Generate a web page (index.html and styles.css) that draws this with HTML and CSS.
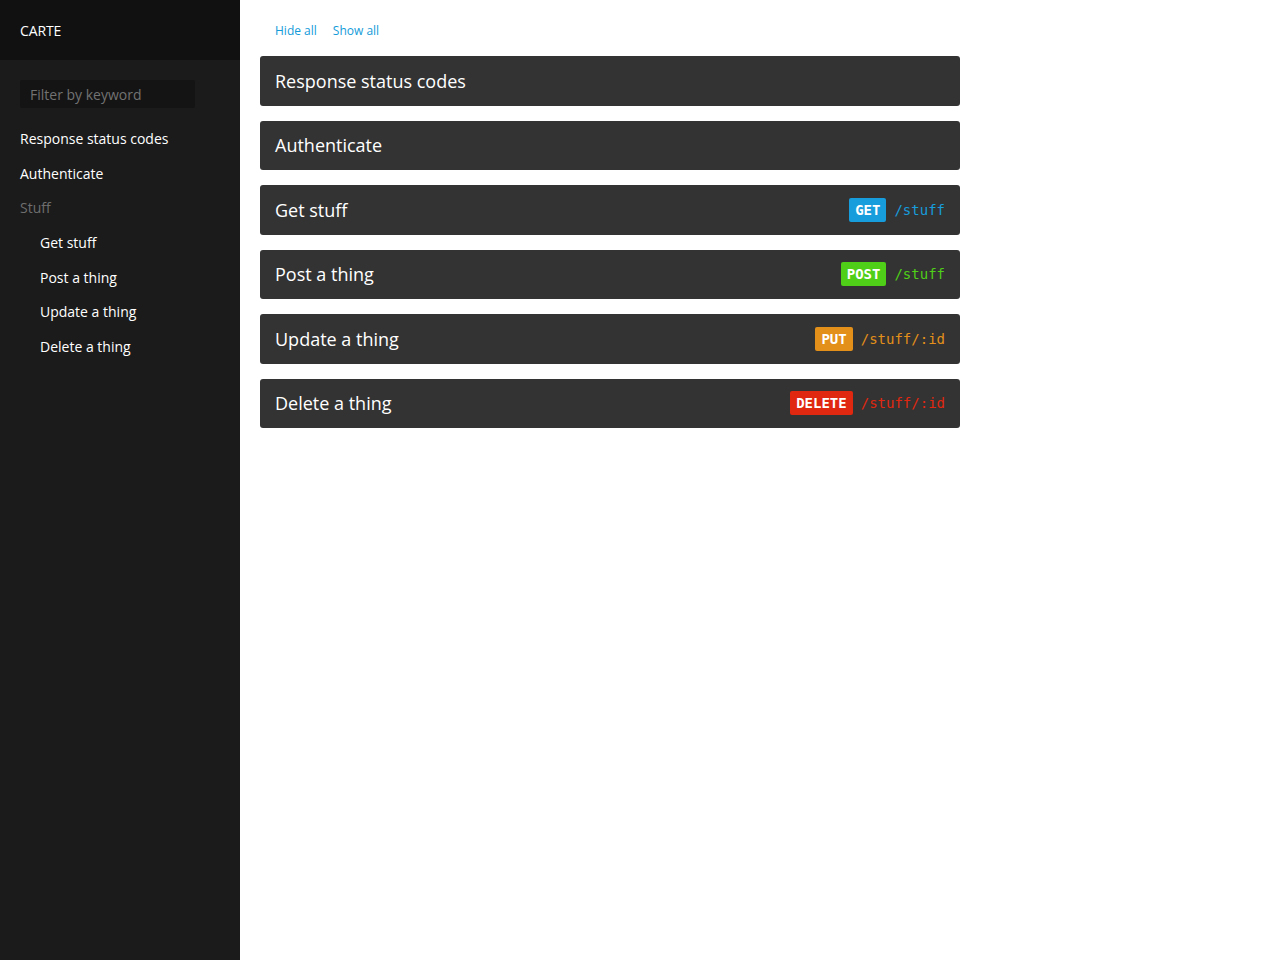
FILE: index.html
```html
<!DOCTYPE html>
<html>
<head>
<meta charset="utf-8">
<link rel="stylesheet" href="styles.css">
</head>
<body>
<div class="layout">
  <aside class="sidebar">
    <div class="brand">CARTE</div>
    <div class="side-body">
      <input class="filter" type="text" placeholder="Filter by keyword">
      <nav class="nav">
        <a class="nav-item">Response status codes</a>
        <a class="nav-item">Authenticate</a>
        <span class="nav-group">Stuff</span>
        <a class="nav-item sub">Get stuff</a>
        <a class="nav-item sub">Post a thing</a>
        <a class="nav-item sub">Update a thing</a>
        <a class="nav-item sub">Delete a thing</a>
      </nav>
    </div>
  </aside>
  <main class="main">
    <div class="toggles">
      <a class="toggle">Hide all</a>
      <a class="toggle">Show all</a>
    </div>
    <div class="cards">
      <div class="card"><span class="card-title">Response status codes</span></div>
      <div class="card"><span class="card-title">Authenticate</span></div>
      <div class="card"><span class="card-title">Get stuff</span><span class="route"><span class="badge get">GET</span><span class="path get-t">/stuff</span></span></div>
      <div class="card"><span class="card-title">Post a thing</span><span class="route"><span class="badge post">POST</span><span class="path post-t">/stuff</span></span></div>
      <div class="card"><span class="card-title">Update a thing</span><span class="route"><span class="badge put">PUT</span><span class="path put-t">/stuff/:id</span></span></div>
      <div class="card"><span class="card-title">Delete a thing</span><span class="route"><span class="badge delete">DELETE</span><span class="path delete-t">/stuff/:id</span></span></div>
    </div>
  </main>
</div>
</body>
</html>
```
FILE: styles.css
```css
* { box-sizing: border-box; }
html, body { margin: 0; padding: 0; height: 100%; }
body { font-family: "Open Sans", "Noto Sans", sans-serif; background: #fff; }
.layout { display: flex; min-height: 960px; }
.sidebar { width: 240px; flex: none; background: #1b1b1b; color: #fff; }
.brand { height: 60px; background: #111; padding: 0 20px; display: flex; align-items: center; font-size: 14px; letter-spacing: -0.1px; }
.side-body { padding: 20px 20px; }
.filter { display: block; width: 175px; height: 28px; background: #141414; border: none; outline: none; border-radius: 2px; padding: 0 10px; font-family: "Open Sans", sans-serif; font-size: 14px; color: #ccc; }
.filter::placeholder { color: #727272; }
.nav { display: flex; flex-direction: column; margin-top: 14px; }
.nav-item, .nav-group { font-size: 14px; line-height: 20px; padding: 7px 0 7.7px; color: #fff; }
.nav-group { color: #6e6e6e; }
.nav-item.sub { padding-left: 20px; }
.main { flex: 1; padding: 20px 20px; }
.toggles { display: flex; gap: 16px; padding-left: 15px; height: 20px; align-items: center; margin-bottom: 16px; }
.toggle { font-size: 12px; color: #139bd9; }
.cards { display: flex; flex-direction: column; gap: 15px; width: 700px; }
.card { height: 49.5px; background: #333; border-radius: 3px; display: flex; align-items: center; justify-content: space-between; padding: 0 15px; color: #fff; }
.card-title { font-size: 18px; }
.route { display: flex; align-items: center; gap: 8px; }
.badge { font-family: "DejaVu Sans Mono", monospace; font-weight: bold; font-size: 14px; color: #fff; height: 24px; line-height: 24px; padding: 0 6px; border-radius: 2px; }
.path { font-family: "DejaVu Sans Mono", monospace; font-size: 14px; }
.get { background: #179cdc; }
.post { background: #4fcf17; }
.put { background: #e3901a; }
.delete { background: #e0270f; }
.get-t { color: #179cdc; }
.post-t { color: #4fcf17; }
.put-t { color: #e3901a; }
.delete-t { color: #e0270f; }
```
